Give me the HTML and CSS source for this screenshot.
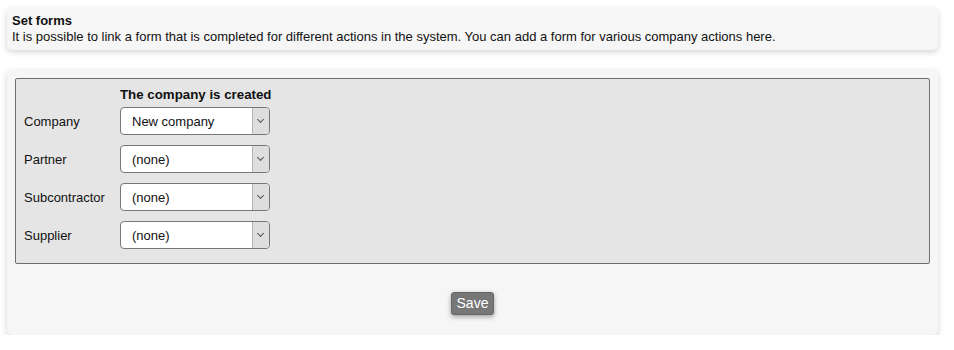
FILE: index.html
```html
<!DOCTYPE html>
<html lang="en">

  <head>
    <meta charset="UTF-8">
    <title>Set forms</title>
    <link rel="stylesheet" href="styles.css">
  </head>

  <body>
    <div class="panel intro">
      <div class="intro-title">Set forms</div>
      <div>It is possible to link a form that is completed for different actions in the system. You can add a form for various company actions here.</div>
    </div>

    <div class="panel">
      <div class="formbox">
        <div class="grid">
          <div></div>
          <div class="col-head">The company is created</div>

          <label class="lbl">Company</label>
          <div class="select"><span>New company</span><i class="arrow"></i></div>

          <label class="lbl">Partner</label>
          <div class="select"><span>(none)</span><i class="arrow"></i></div>

          <label class="lbl">Subcontractor</label>
          <div class="select"><span>(none)</span><i class="arrow"></i></div>

          <label class="lbl">Supplier</label>
          <div class="select"><span>(none)</span><i class="arrow"></i></div>
        </div>
      </div>
      <div class="actions">
        <button class="btn">Save</button>
      </div>
    </div>
  </body>

</html>
```

FILE: styles.css
```css
body {
  margin: 0;
  padding: 8px 16px 0 7px;
  font-family: "Liberation Sans", Arial, sans-serif;
  font-size: 13px;
  color: #111;
  background: #fff;
}

.panel {
  background: #f6f6f6;
  border-radius: 5px;
  box-shadow: 0 2px 6px rgba(0, 0, 0, 0.18);
}

.intro {
  padding: 5px 6px 5px 5px;
  line-height: 16px;
  margin-bottom: 20px;
}

.intro-title {
  font-weight: bold;
}

.panel + .panel {
  padding: 8px 8px 20px 8px;
}

.formbox {
  background: #e5e5e5;
  border: 1px solid #6e6e6e;
  border-radius: 2px;
  padding: 8px 8px 14px 8px;
}

.grid {
  display: grid;
  grid-template-columns: 96px 152px;
  row-gap: 10px;
  align-items: center;
}

.col-head {
  font-weight: bold;
  font-size: 13.3px;
  margin-bottom: -6px;
  line-height: 16px;
}

.select {
  width: 150px;
  height: 28px;
  box-sizing: border-box;
  border: 1px solid #767676;
  border-radius: 4px;
  background: #fff;
  display: flex;
  align-items: center;
  overflow: hidden;
}

.select span {
  flex: 1;
  padding-left: 11px;
}

.arrow {
  width: 16px;
  height: 100%;
  background: #dedede;
  border-left: 1px solid #b5b5b5;
  position: relative;
}

.arrow::after {
  content: "";
  position: absolute;
  left: 5px;
  top: 9px;
  width: 4px;
  height: 4px;
  border-right: 1px solid #555;
  border-bottom: 1px solid #555;
  transform: rotate(45deg);
}

.actions {
  display: flex;
  justify-content: center;
  padding-top: 28px;
}

.btn {
  font-family: "Liberation Sans", Arial, sans-serif;
  font-size: 14px;
  color: #fff;
  background: #777;
  border: 1px solid #666;
  border-radius: 3px;
  padding: 2px 5px 3px;
  box-shadow: 0 2px 5px rgba(0, 0, 0, 0.35);
}
```
